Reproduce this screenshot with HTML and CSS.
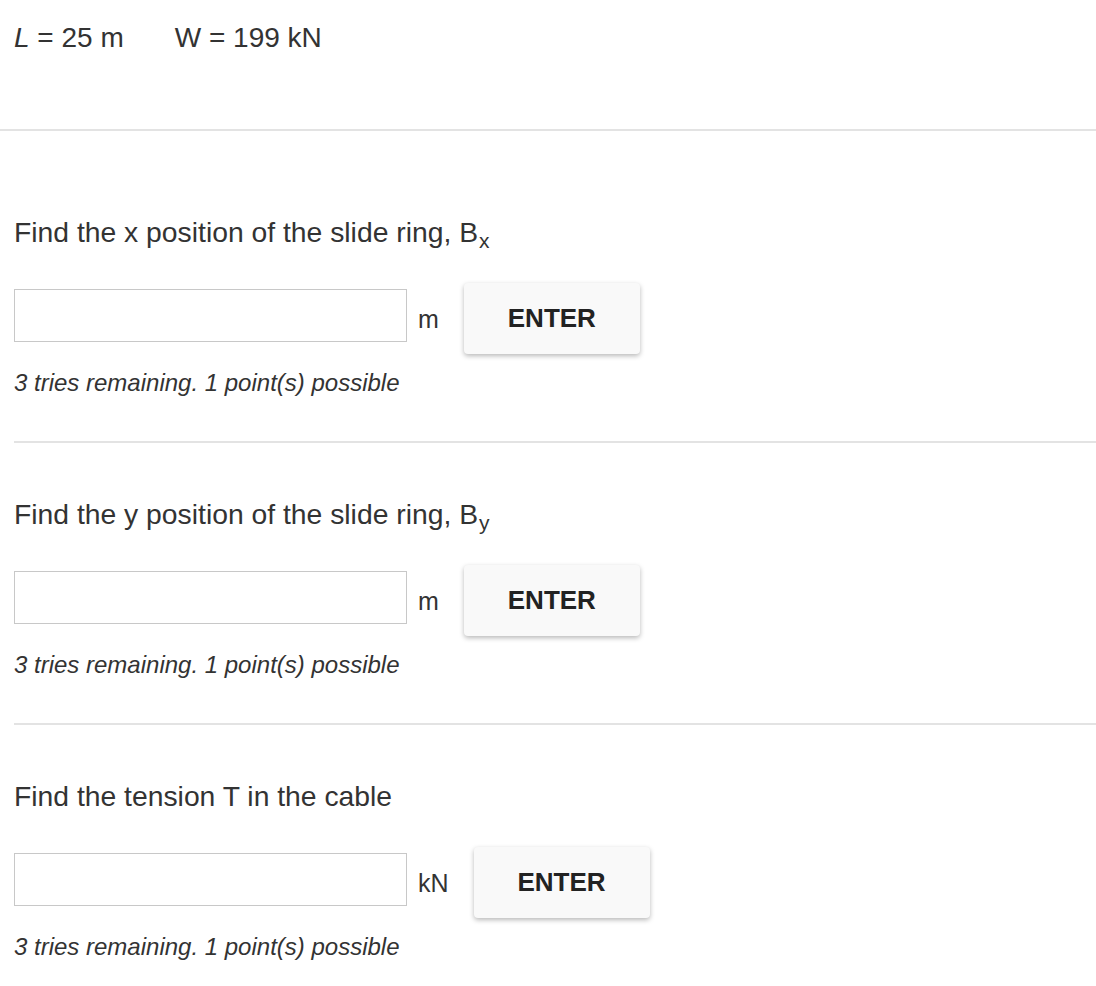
FILE: index.html
```html
<!DOCTYPE html>
<html lang="en">
<head>
    <meta charset="UTF-8">
    <meta name="viewport" content="width=device-width, initial-scale=1.0">
    <title>Slide Ring Problem</title>
    <link rel="stylesheet" href="styles.css">
</head>
<body>

    <!-- Given values -->
    <div class="given">
        <span><i>L</i> = 25 m</span>
        <span>W = 199 kN</span>
    </div>

    <!-- Part 1 -->
    <div class="part first">
        <p class="question">Find the x position of the slide ring, B<sub>x</sub></p>
        <div class="answer-row">
            <input type="text" class="answer">
            <span class="unit">m</span>
            <button class="enter-btn">ENTER</button>
        </div>
        <p class="tries">3 tries remaining. 1 point(s) possible</p>
    </div>

    <!-- Part 2 -->
    <div class="part">
        <p class="question">Find the y position of the slide ring, B<sub>y</sub></p>
        <div class="answer-row">
            <input type="text" class="answer">
            <span class="unit">m</span>
            <button class="enter-btn">ENTER</button>
        </div>
        <p class="tries">3 tries remaining. 1 point(s) possible</p>
    </div>

    <!-- Part 3 -->
    <div class="part">
        <p class="question">Find the tension T in the cable</p>
        <div class="answer-row">
            <input type="text" class="answer">
            <span class="unit">kN</span>
            <button class="enter-btn">ENTER</button>
        </div>
        <p class="tries">3 tries remaining. 1 point(s) possible</p>
    </div>

</body>
</html>
```

FILE: styles.css
```css
body {
    font-family: "Liberation Sans", Arial, sans-serif;
    margin: 0;
    background-color: #fff;
    color: #333;
}

/* Given values */
.given {
    display: flex;
    gap: 51px;
    padding: 22px 14px 75px;
    font-size: 28px;
    line-height: 32px;
    border-bottom: 2px solid #e3e3e3;
}

/* Question parts */
.part {
    margin-left: 14px;
    padding: 55px 0 44px;
}

.part.first {
    padding-top: 85px;
}

.part + .part {
    border-top: 2px solid #e3e3e3;
}

.question {
    margin: 0;
    font-size: 28.3px;
    line-height: 32px;
}

.question sub {
    font-size: 21px;
    line-height: 0;
    vertical-align: -6px;
    margin-left: 1px;
}

.answer-row {
    display: flex;
    align-items: flex-start;
    margin-top: 35px;
}

.answer {
    box-sizing: border-box;
    width: 393px;
    height: 53px;
    margin: 6px 0 0;
    border: 1px solid #c8c8c8;
    border-radius: 0;
    background: #fff;
}

.unit {
    align-self: center;
    padding: 0 25px 0 11px;
    font-size: 25px;
    line-height: 30px;
}

.enter-btn {
    width: 176px;
    height: 71px;
    border: none;
    border-radius: 4px;
    background-color: #f9f9f9;
    box-shadow: 0 2px 5px rgba(0, 0, 0, 0.28);
    font-family: "Liberation Sans", Arial, sans-serif;
    font-size: 26px;
    font-weight: bold;
    color: #222;
    cursor: pointer;
}

.tries {
    margin: 15px 0 0;
    font-size: 24px;
    line-height: 28px;
    font-style: italic;
}
```
